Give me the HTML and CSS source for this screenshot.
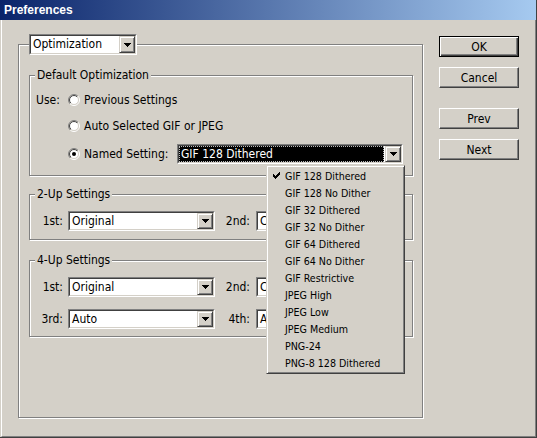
FILE: index.html
```
<!DOCTYPE html>
<html>
<head>
<meta charset="utf-8">
<title>Preferences</title>
<link rel="stylesheet" href="styles.css">
</head>
<body>
<div class="window">
  <div class="titlebar">Preferences</div>
  <div class="frame">
    <div class="group outer">
      <div class="combo opt-combo">
        <div class="combo-in">
          <div class="combo-text">Optimization</div>
          <div class="combo-btn"><svg width="7" height="4" viewBox="0 0 7 4" shape-rendering="crispEdges"><path d="M0 0h7v1h-1v1h-1v1h-1v1h-1v-1h-1v-1h-1v-1h-1z" fill="#000"/></svg></div>
        </div>
      </div>

      <div class="group inner default">
        <div class="legend">Default Optimization</div>
        <div class="row r1">
          <span class="use">Use:</span>
          <svg class="radio" width="12" height="12" viewBox="0 0 12 12">
            <defs>
              <linearGradient id="ro" x1="0" y1="0" x2="1" y2="1"><stop offset="0.5" stop-color="#808080"/><stop offset="0.5" stop-color="#ffffff"/></linearGradient>
              <linearGradient id="ri" x1="0" y1="0" x2="1" y2="1"><stop offset="0.5" stop-color="#404040"/><stop offset="0.5" stop-color="#d4d0c8"/></linearGradient>
            </defs>
            <circle cx="6" cy="6" r="5.5" fill="none" stroke="url(#ro)"/>
            <circle cx="6" cy="6" r="4.5" fill="#fff" stroke="url(#ri)"/>
          </svg>
          <span class="rlabel">Previous Settings</span>
        </div>
        <div class="row r2 indent">
          <svg class="radio" width="12" height="12" viewBox="0 0 12 12">
            <circle cx="6" cy="6" r="5.5" fill="none" stroke="url(#ro)"/>
            <circle cx="6" cy="6" r="4.5" fill="#fff" stroke="url(#ri)"/>
          </svg>
          <span class="rlabel">Auto Selected GIF or JPEG</span>
        </div>
        <div class="row r3 indent">
          <svg class="radio" width="12" height="12" viewBox="0 0 12 12">
            <circle cx="6" cy="6" r="5.5" fill="none" stroke="url(#ro)"/>
            <circle cx="6" cy="6" r="4.5" fill="#fff" stroke="url(#ri)"/>
            <circle cx="6" cy="6" r="2" fill="#000"/>
          </svg>
          <span class="rlabel named">Named Setting:</span>
          <div class="combo wide">
            <div class="combo-in">
              <div class="combo-text sel">GIF 128 Dithered</div>
              <div class="combo-btn"><svg width="7" height="4" viewBox="0 0 7 4" shape-rendering="crispEdges"><path d="M0 0h7v1h-1v1h-1v1h-1v1h-1v-1h-1v-1h-1v-1h-1z" fill="#000"/></svg></div>
            </div>
          </div>
        </div>
      </div>

      <div class="group inner twoup">
        <div class="legend">2-Up Settings</div>
        <div class="row s1">
          <span class="lab1">1st:</span>
          <div class="combo mid"><div class="combo-in"><div class="combo-text">Original</div><div class="combo-btn"><svg width="7" height="4" viewBox="0 0 7 4" shape-rendering="crispEdges"><path d="M0 0h7v1h-1v1h-1v1h-1v1h-1v-1h-1v-1h-1v-1h-1z" fill="#000"/></svg></div></div></div>
          <span class="lab2">2nd:</span>
          <div class="combo mid"><div class="combo-in"><div class="combo-text">Current</div><div class="combo-btn"><svg width="7" height="4" viewBox="0 0 7 4" shape-rendering="crispEdges"><path d="M0 0h7v1h-1v1h-1v1h-1v1h-1v-1h-1v-1h-1v-1h-1z" fill="#000"/></svg></div></div></div>
        </div>
      </div>

      <div class="group inner fourup">
        <div class="legend">4-Up Settings</div>
        <div class="row s1">
          <span class="lab1">1st:</span>
          <div class="combo mid"><div class="combo-in"><div class="combo-text">Original</div><div class="combo-btn"><svg width="7" height="4" viewBox="0 0 7 4" shape-rendering="crispEdges"><path d="M0 0h7v1h-1v1h-1v1h-1v1h-1v-1h-1v-1h-1v-1h-1z" fill="#000"/></svg></div></div></div>
          <span class="lab2">2nd:</span>
          <div class="combo mid"><div class="combo-in"><div class="combo-text">Current</div><div class="combo-btn"><svg width="7" height="4" viewBox="0 0 7 4" shape-rendering="crispEdges"><path d="M0 0h7v1h-1v1h-1v1h-1v1h-1v-1h-1v-1h-1v-1h-1z" fill="#000"/></svg></div></div></div>
        </div>
        <div class="row s2">
          <span class="lab1">3rd:</span>
          <div class="combo mid"><div class="combo-in"><div class="combo-text">Auto</div><div class="combo-btn"><svg width="7" height="4" viewBox="0 0 7 4" shape-rendering="crispEdges"><path d="M0 0h7v1h-1v1h-1v1h-1v1h-1v-1h-1v-1h-1v-1h-1z" fill="#000"/></svg></div></div></div>
          <span class="lab2">4th:</span>
          <div class="combo mid"><div class="combo-in"><div class="combo-text">Auto</div><div class="combo-btn"><svg width="7" height="4" viewBox="0 0 7 4" shape-rendering="crispEdges"><path d="M0 0h7v1h-1v1h-1v1h-1v1h-1v-1h-1v-1h-1v-1h-1z" fill="#000"/></svg></div></div></div>
        </div>
      </div>
    </div>

    <div class="buttons">
      <div class="btn def">OK</div>
      <div class="btn cancel">Cancel</div>
      <div class="btn prev">Prev</div>
      <div class="btn next">Next</div>
    </div>
  </div>

  <div class="popup">
    <div class="item"><span class="check"><svg width="7" height="7" viewBox="0 0 7 7" shape-rendering="crispEdges"><path d="M6 0h1v3h-1v1h-1v1h-1v1h-1v1h-1v-1h-1v-1h-1v-3h1v1h1v1h1v-1h1v-1h1v-1h1z" fill="#000"/></svg></span>GIF 128 Dithered</div>
    <div class="item"><span class="check"></span>GIF 128 No Dither</div>
    <div class="item"><span class="check"></span>GIF 32 Dithered</div>
    <div class="item"><span class="check"></span>GIF 32 No Dither</div>
    <div class="item"><span class="check"></span>GIF 64 Dithered</div>
    <div class="item"><span class="check"></span>GIF 64 No Dither</div>
    <div class="item"><span class="check"></span>GIF Restrictive</div>
    <div class="item"><span class="check"></span>JPEG High</div>
    <div class="item"><span class="check"></span>JPEG Low</div>
    <div class="item"><span class="check"></span>JPEG Medium</div>
    <div class="item"><span class="check"></span>PNG-24</div>
    <div class="item"><span class="check"></span>PNG-8 128 Dithered</div>
  </div>
</div>
</body>
</html>
```

FILE: styles.css
```
* { box-sizing: border-box; }

body {
  margin: 0;
  background: #d4d0c8;
  font-family: "DejaVu Sans Condensed", "DejaVu Sans", sans-serif;
  font-size: 12px;
  color: #000;
}

.window {
  position: relative;
  width: 537px;
  height: 438px;
  display: flex;
  flex-direction: column;
  background: #d4d0c8;
  border-right: 1px solid #404040;
  border-bottom: 1px solid #404040;
}

.titlebar {
  flex: none;
  height: 20px;
  display: flex;
  align-items: center;
  padding-left: 4px;
  background: linear-gradient(to right, #0a246a, #a6caf0);
  color: #fff;
  font: bold 12px "Liberation Sans", Arial, sans-serif;
}

.frame {
  flex: 1;
  margin-left: 1px;
  border-left: 1px solid #fff;
  border-right: 1px solid #808080;
  border-bottom: 1px solid #808080;
  display: flex;
  align-items: flex-start;
  padding: 16px 0 0 16px;
}

.group {
  border: 1px solid #808080;
  box-shadow: inset 1px 1px 0 #fff, 1px 1px 0 #fff;
}

.outer {
  flex: none;
  width: 405px;
  height: 374px;
  margin-top: 8px;
}

.inner {
  width: 384px;
  margin-left: 10px;
}

.default { height: 101px; margin-top: 20px; }
.twoup { height: 46px; margin-top: 18px; }
.fourup { height: 77px; margin-top: 20px; }

.legend {
  width: fit-content;
  height: 13px;
  line-height: 13px;
  margin: -7px 0 0 5px;
  padding: 0 2px;
  background: #d4d0c8;
  white-space: nowrap;
}

.row {
  display: flex;
  align-items: center;
  height: 20px;
  white-space: nowrap;
}

.r1 { margin-top: 8px; }
.r2 { margin-top: 6px; }
.r3 { margin-top: 8px; }
.s1 { margin-top: 10px; }
.s2 { margin-top: 12px; }

.use {
  flex: none;
  width: 38px;
  padding-left: 6px;
}

.indent { padding-left: 38px; }

.radio { flex: none; display: block; }

.rlabel { margin-left: 4px; }

.named {
  flex: none;
  width: 93px;
}

.lab1 {
  flex: none;
  width: 38px;
  text-align: right;
  padding-right: 5px;
}

.lab2 {
  flex: none;
  width: 41px;
  text-align: right;
  padding-right: 6px;
}

/* combo box */
.combo {
  flex: none;
  display: flex;
  height: 20px;
  border: 1px solid;
  border-color: #808080 #fff #fff #808080;
  background: #fff;
}

.combo-in {
  flex: 1;
  min-width: 0;
  display: flex;
  border: 1px solid;
  border-color: #404040 #d4d0c8 #d4d0c8 #404040;
}

.combo-text {
  flex: 1;
  min-width: 0;
  padding-left: 2px;
  line-height: 16px;
  white-space: nowrap;
  overflow: hidden;
}

.combo-text.sel {
  background: #000;
  color: #fff;
  outline: 1px dotted #bbb;
  outline-offset: -1px;
  margin-right: 1px;
}

.combo-btn {
  flex: none;
  width: 16px;
  display: flex;
  align-items: center;
  justify-content: center;
  background: #d4d0c8;
  border: 1px solid;
  border-color: #d4d0c8 #404040 #404040 #d4d0c8;
  box-shadow: inset 1px 1px 0 #fff, inset -1px -1px 0 #808080;
}

.combo-btn svg { display: block; }

.opt-combo {
  width: 108px;
  height: 21px;
  margin: -11px 0 0 10px;
}

.wide { width: 226px; }
.mid { width: 147px; }

/* buttons */
.buttons {
  flex: none;
  width: 80px;
  margin-left: 16px;
  display: flex;
  flex-direction: column;
}

.btn {
  height: 21px;
  display: flex;
  align-items: center;
  justify-content: center;
  background: #d4d0c8;
  border: 1px solid;
  border-color: #fff #404040 #404040 #fff;
  box-shadow: inset -1px -1px 0 #808080;
}

.btn.def {
  border-color: #000;
  box-shadow: inset 1px 1px 0 #fff, inset -1px -1px 0 #404040, inset -2px -2px 0 #808080;
}

.cancel { margin-top: 10px; }
.prev { margin-top: 20px; }
.next { margin-top: 10px; }

/* drop-down list */
.popup {
  position: absolute;
  left: 266px;
  top: 165px;
  width: 139px;
  height: 209px;
  padding: 1px;
  font-size: 10.6px;
  background: #d4d0c8;
  border: 1px solid;
  border-color: #d4d0c8 #404040 #404040 #d4d0c8;
  box-shadow: inset 1px 1px 0 #fff, inset -1px -1px 0 #808080;
}

.item {
  display: flex;
  align-items: center;
  height: 17px;
  white-space: nowrap;
}

.check {
  flex: none;
  width: 17px;
  display: flex;
  justify-content: center;
}

.check svg { display: block; }
```
